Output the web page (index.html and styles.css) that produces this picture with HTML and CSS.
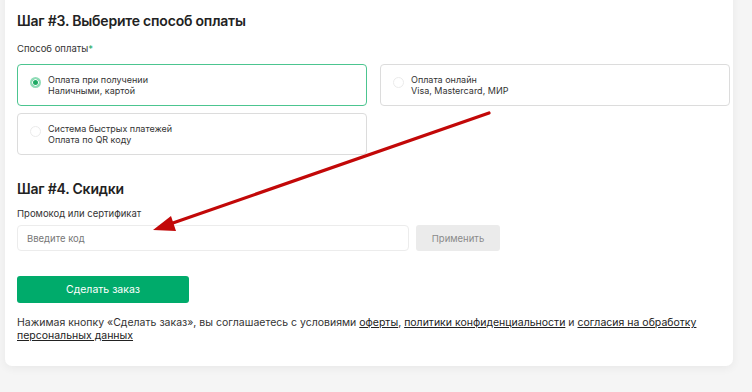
FILE: index.html
```html
<!DOCTYPE html>
<html lang="ru">
<head>
<meta charset="utf-8">
<link rel="stylesheet" href="styles.css">
</head>
<body>
<div class="page">
  <div class="card">
    <h2 class="step">Шаг #3. Выберите способ оплаты</h2>
    <div class="label">Способ оплаты<span class="req">*</span></div>
    <div class="options">
      <div class="option active">
        <span class="radio checked"></span>
        <div class="otext"><div>Оплата при получении</div><div>Наличными, картой</div></div>
      </div>
      <div class="option">
        <span class="radio"></span>
        <div class="otext"><div>Оплата онлайн</div><div>Visa, Mastercard, МИР</div></div>
      </div>
      <div class="option">
        <span class="radio"></span>
        <div class="otext"><div>Система быстрых платежей</div><div>Оплата по QR коду</div></div>
      </div>
    </div>
    <h2 class="step step4">Шаг #4. Скидки</h2>
    <div class="label label2">Промокод или сертификат</div>
    <div class="promo">
      <div class="input">Введите код</div>
      <div class="apply">Применить</div>
    </div>
    <div class="order">Сделать заказ</div>
    <p class="terms">Нажимая кнопку «Сделать заказ», вы соглашаетесь с условиями <a>оферты</a>, <a>политики конфиденциальности</a> и <a>согласия на обработку</a> <a>персональных данных</a></p>
  </div>
  <svg class="arrow" width="752" height="392" viewBox="0 0 752 392">
    <line x1="489" y1="123" x2="170" y2="234" stroke="#c20808" stroke-width="3.2" stroke-linecap="round"/>
    <polygon points="153,240 171,226 176,241" fill="#c20808"/>
  </svg>
</div>
</body>
</html>
```
FILE: styles.css
```css
* { box-sizing: border-box; }
html, body { margin: 0; padding: 0; }
body {
  background: #f5f5f5;
  font-family: Inter, "Noto Sans", sans-serif;
  color: #222;
  width: 752px;
  height: 392px;
  overflow: hidden;
}
.page { position: relative; width: 752px; height: 392px; }
.card {
  margin-left: 5px;
  margin-top: -10px;
  width: 728px;
  background: #fff;
  border-radius: 0 0 7px 7px;
  box-shadow: 0 2px 10px rgba(0,0,0,0.06);
  padding: 21px 12px 24px 12px;
}
.step {
  margin: 0;
  font-size: 14px;
  line-height: 20px;
  font-weight: 600;
  color: #222;
  letter-spacing: -0.2px;
}
.label {
  margin-top: 12px;
  font-size: 9.5px;
  line-height: 12px;
  color: #333;
}
.label2 { margin-top: 9px; }
.req { color: #1fae6a; }
.options {
  margin-top: 9px;
  display: grid;
  grid-template-columns: 350px 350px;
  column-gap: 13px;
  row-gap: 7px;
}
.option {
  height: 42px;
  border: 1px solid #dcdcdc;
  border-radius: 4px;
  display: flex;
  align-items: center;
  padding-left: 12px;
  gap: 7px;
}
.option.active { border-color: #4cc590; }
.radio {
  width: 11px; height: 11px;
  border-radius: 50%;
  border: 1px solid #ebebeb;
  flex: none;
  margin-top: -6px;
}
.radio.checked {
  border: 2px solid #8fdcb7;
  background: #1faa64;
  box-shadow: inset 0 0 0 1px #fff;
}
.otext {
  font-size: 9px;
  line-height: 11px;
  color: #333;
}
.step4 { margin-top: 24px; }
.promo {
  margin-top: 5px;
  display: flex;
  gap: 7px;
}
.input {
  width: 392px; height: 26px;
  border: 1px solid #ececec;
  border-radius: 4px;
  font-size: 9.5px;
  color: #777;
  display: flex; align-items: center;
  padding-left: 9px;
}
.apply {
  width: 84px; height: 26px;
  background: #ebebeb;
  border-radius: 3px;
  font-size: 9.5px;
  color: #8a8a8a;
  display: flex; align-items: center; justify-content: center;
}
.order {
  margin-top: 25px;
  width: 172px; height: 27px;
  background: #00ab6b;
  border-radius: 3px;
  color: #fff;
  font-size: 10.5px;
  display: flex; align-items: center; justify-content: center;
}
.terms {
  margin: 13px 0 0 0;
  font-size: 10.5px;
  line-height: 13px;
  color: #333;
  width: 690px;
}
.terms a { color: #222; text-decoration: underline; }
.arrow { position: absolute; left: 0; top: 0; pointer-events: none; }
```
